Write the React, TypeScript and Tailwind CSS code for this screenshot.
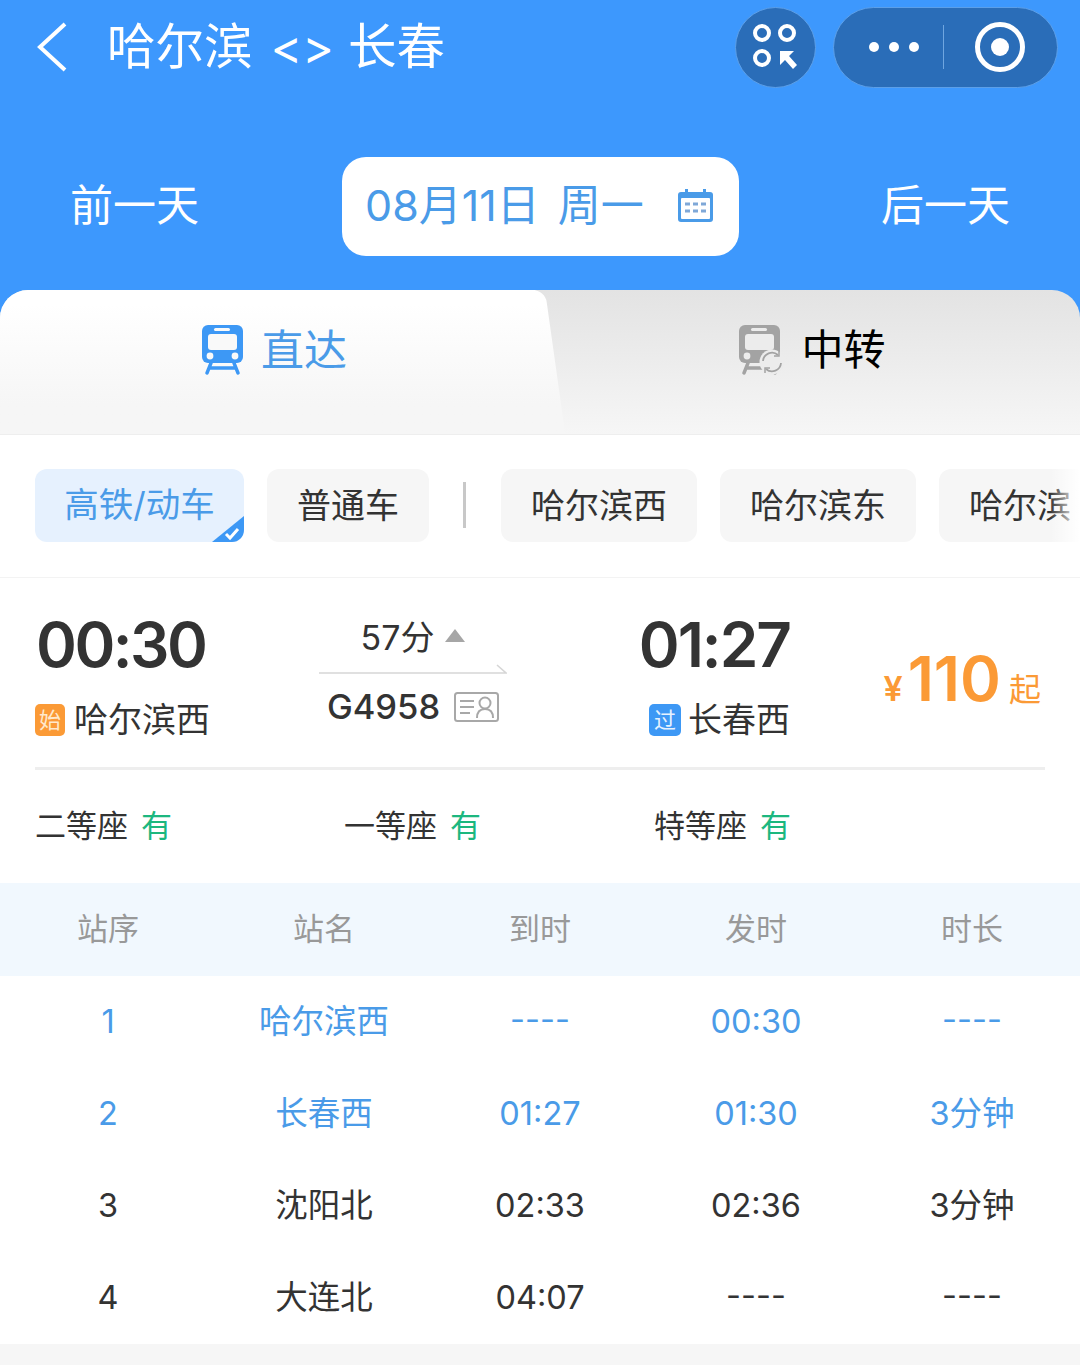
const font = { fontFamily: '"Inter","Noto Sans CJK SC",sans-serif' };

function TrainIcon({ gray }: { gray?: boolean }) {
  const c = gray ? "#a3a3a3" : "#3d98f5";
  const bg = gray ? "#ececec" : "#f9f9f9";
  return (
    <svg width="46" height="50" viewBox="0 0 46 50">
      <path d="M7 0h29a6 6 0 0 1 6 6v26a6 6 0 0 1-6 6H7a6 6 0 0 1-6-6V6a6 6 0 0 1 6-6z" fill={c} />
      <rect x="13" y="3" width="16" height="3" rx="1.5" fill={bg} />
      <rect x="7" y="9" width="29" height="16" rx="3" fill={bg} />
      <circle cx="9" cy="31" r="3.4" fill={bg} />
      <circle cx="34" cy="31" r="3.4" fill={bg} />
      <path d="M10 38l-4 10M33 38l4 10M8 43h27" stroke={c} strokeWidth="3.4" strokeLinecap="round" fill="none" />
      {gray && (
        <g>
          <circle cx="34" cy="37" r="12.5" fill={bg} />
          <path d="M25 36a9 9 0 0 1 15-6M43 38a9 9 0 0 1-15 6" stroke={c} strokeWidth="1.8" fill="none" />
          <path d="M41 26v5h-5M27 48v-5h5" stroke={c} strokeWidth="1.5" fill="none" />
        </g>
      )}
    </svg>
  );
}

const rows = [
  ["1", "哈尔滨西", "----", "00:30", "----"],
  ["2", "长春西", "01:27", "01:30", "3分钟"],
  ["3", "沈阳北", "02:33", "02:36", "3分钟"],
  ["4", "大连北", "04:07", "----", "----"],
];

export default function App() {
  return (
    <div className="w-[1080px] h-[1365px] overflow-hidden bg-white" style={font}>
      {/* header */}
      <div className="h-[290px] bg-[#3d98fd] flex flex-col">
        <div className="flex items-center h-[94px] pl-[36px] pr-[22px]">
          <svg width="32" height="50" viewBox="0 0 32 50" fill="none">
            <path d="M29 2L4 25l25 23" stroke="#fff" strokeWidth="4" />
          </svg>
          <div className="ml-[39px] text-[48.5px] leading-none text-white flex items-center">
            <span>哈尔滨</span>
            <span className="ml-[18px] mr-[14px] text-[48px]">&lt;&gt;</span>
            <span>长春</span>
          </div>
          <div className="ml-auto flex items-center gap-[17px]">
            <div className="w-[81px] h-[81px] rounded-full bg-[#2a6db8] border border-[#5c9fe8] flex items-center justify-center">
              <svg width="46" height="46" viewBox="0 0 46 46" fill="none">
                <circle cx="9" cy="9" r="7" stroke="#fff" strokeWidth="4" />
                <circle cx="34" cy="9" r="7" stroke="#fff" strokeWidth="4" />
                <circle cx="9" cy="34" r="7" stroke="#fff" strokeWidth="4" />
                <path d="M27 27h14l-5 5 8 9-4 4-8-9-5 5z" fill="#fff" />
              </svg>
            </div>
            <div className="w-[225px] h-[81px] rounded-full bg-[#2a6db8] border border-[#5c9fe8] flex items-center pl-[35px]">
              <div className="flex gap-[10px]">
                <span className="w-[10px] h-[10px] rounded-full bg-white" />
                <span className="w-[10px] h-[10px] rounded-full bg-white" />
                <span className="w-[10px] h-[10px] rounded-full bg-white" />
              </div>
              <div className="w-px h-[44px] bg-[#6fa6e0] ml-[24px]" />
              <div className="ml-[31px] w-[50px] h-[50px] rounded-full border-[5px] border-white flex items-center justify-center">
                <span className="w-[18px] h-[18px] rounded-full bg-white" />
              </div>
            </div>
          </div>
        </div>
        <div className="mt-[63px] flex items-center h-[99px]">
          <div className="w-[342px] pl-[70px] pb-[2px] text-[43px] text-white leading-none">前一天</div>
          <div className="w-[397px] h-[99px] bg-white rounded-[24px] flex items-center pl-[23px] pb-[2px] text-[43px] text-[#4a9be8] leading-none whitespace-pre">
            <span>08月11日</span>
            <span className="ml-[18px]">周一</span>
            <svg className="ml-[33px]" width="37" height="34" viewBox="0 0 37 34">
              <path d="M4 3h29a3 3 0 0 1 3 3v24a3 3 0 0 1-3 3H4a3 3 0 0 1-3-3V6a3 3 0 0 1 3-3z" fill="#4a9be8" />
              <rect x="8" y="0" width="3" height="5" fill="#4a9be8" />
              <rect x="26" y="0" width="3" height="5" fill="#4a9be8" />
              <rect x="4" y="9" width="29" height="21" rx="1" fill="#fff" />
              <path d="M8 15h5M16 15h5M24 15h5M8 22h5M16 22h5M24 22h5" stroke="#7fa8d8" strokeWidth="3" />
            </svg>
          </div>
          <div className="flex-1 pl-[142px] pb-[2px] text-[43px] text-white leading-none">后一天</div>
        </div>
      </div>

      {/* tabs */}
      <div className="bg-[#3d98fd]">
        <div className="h-[145px] flex rounded-t-[28px] overflow-hidden bg-gradient-to-b from-[#e3e3e3] to-[#f6f6f6] border-b border-[#eeeeee]">
          <div className="relative w-[535px] h-full bg-gradient-to-b from-white from-10% to-[#f6f6f6] to-80% flex items-start pt-[35px] justify-center pl-[13px]">
            <div className="absolute top-0 bottom-0 right-[-10px] w-[60px] bg-gradient-to-b from-white from-10% to-[#f6f6f6] to-80% skew-x-[8deg] rounded-tr-[12px] origin-top" />
            <div className="relative flex items-center gap-[14px]">
              <TrainIcon />
              <span className="text-[43px] leading-[50px] text-[#4a9be8]">直达</span>
            </div>
          </div>
          <div className="flex-1 flex items-start justify-center pt-[35px] pl-[9px]">
            <div className="flex items-center gap-[17px]">
              <TrainIcon gray />
              <span className="text-[42px] leading-[50px] text-black">中转</span>
            </div>
          </div>
        </div>
      </div>

      {/* filters */}
      <div className="relative h-[143px] pb-[2px] pl-[35px] flex items-center gap-[23px] overflow-hidden whitespace-nowrap border-b border-[#f3f3f3]">
        <div className="relative shrink-0 w-[209px] h-[73px] rounded-[12px] bg-[#e6f1fe] text-[#4a9be8] text-[34.5px] flex items-center justify-center overflow-hidden">
          高铁/动车
          <svg className="absolute right-0 bottom-0" width="32" height="26" viewBox="0 0 32 26">
            <path d="M32 0v26H0z" fill="#3d98f5" />
            <path d="M14 18l4 4 8-9" stroke="#fff" strokeWidth="3" fill="none" />
          </svg>
        </div>
        <div className="shrink-0 w-[162px] h-[73px] rounded-[12px] bg-[#f6f6f6] text-[#333] text-[34px] flex items-center justify-center">普通车</div>
        <div className="shrink-0 w-[3px] h-[46px] bg-[#c8c8c8] ml-[11px] mr-[12px]" />
        <div className="shrink-0 w-[196px] h-[73px] rounded-[12px] bg-[#f6f6f6] text-[#333] text-[34px] flex items-center justify-center">哈尔滨西</div>
        <div className="shrink-0 w-[196px] h-[73px] rounded-[12px] bg-[#f6f6f6] text-[#333] text-[34px] flex items-center justify-center">哈尔滨东</div>
        <div className="shrink-0 w-[196px] h-[73px] rounded-[12px] bg-[#f6f6f6] text-[#333] text-[34px] flex items-center pl-[30px]">哈尔滨</div>
        <div className="absolute right-0 top-0 bottom-0 w-[30px] bg-gradient-to-r from-transparent to-white" />
      </div>

      {/* train */}
      <div className="px-[35px]">
        <div className="h-[192px] flex border-b-[3px] border-[#eeeeee] pt-[32px]">
          <div className="w-[284px]">
            <div className="text-[62px] leading-[70px] font-semibold text-[#333] tracking-[-2.5px] pl-[1px]">00:30</div>
            <div className="mt-[23px] flex items-center gap-[9px] text-[34px] text-[#333] leading-[34px]">
              <span className="w-[30px] h-[32px] rounded-[5px] bg-[#fb9a36] text-[#ffe9cc] text-[22px] flex items-center justify-center">始</span>
              哈尔滨西
            </div>
          </div>
          <div className="w-[188px] flex flex-col items-center">
            <div className="flex items-center text-[34px] text-[#333] leading-[44px] h-[46px] mt-[5px]">
              57分
              <svg className="ml-[11px] mb-[6px]" width="20" height="13" viewBox="0 0 20 13"><path d="M10 0l10 13H0z" fill="#a6a6a6" /></svg>
            </div>
            <svg className="mt-[2px]" width="188" height="12" viewBox="0 0 188 12" fill="none">
              <path d="M0 10h187l-9-8" stroke="#d6d6d6" strokeWidth="1.6" />
            </svg>
            <div className="mt-[10px] flex items-center gap-[14px] text-[34.5px] leading-[44px] font-medium text-[#333]">
              G4958
              <svg width="45" height="30" viewBox="0 0 45 30" fill="none" stroke="#a8a8a8">
                <rect x="1" y="1" width="43" height="28" rx="2.5" strokeWidth="2" />
                <path d="M6 9h14M6 15h14M6 21h10" strokeWidth="2" />
                <circle cx="31" cy="11" r="5.5" strokeWidth="2" />
                <path d="M23 26c0-6 3-9 8-9s8 3 8 9" strokeWidth="2" />
              </svg>
            </div>
          </div>
          <div className="w-[283px] flex flex-col items-end">
            <div className="text-[62px] leading-[70px] font-semibold text-[#333] tracking-[-2px]">01:27</div>
            <div className="mt-[23px] flex items-center gap-[7px] text-[34px] text-[#333] leading-[34px]">
              <span className="w-[32px] h-[32px] rounded-[5px] bg-[#3d98f5] text-[#e6f2ff] text-[22px] flex items-center justify-center">过</span>
              长春西
            </div>
          </div>
          <div className="ml-auto pr-[4px] flex items-baseline h-[70px] mt-[38px] text-[#fb9a36] leading-none">
            <span className="text-[34px] font-semibold">¥</span>
            <span className="text-[62px] font-semibold ml-[5px]">110</span>
            <span className="text-[32px] ml-[8px]">起</span>
          </div>
        </div>
        <div className="h-[113px] grid grid-cols-[309px_310px_1fr] items-center text-[31px] text-[#333]">
          <div className="flex gap-[13px]"><span>二等座</span><span className="text-[#1cb77f]">有</span></div>
          <div className="flex gap-[13px]"><span>一等座</span><span className="text-[#1cb77f]">有</span></div>
          <div className="flex gap-[13px]"><span>特等座</span><span className="text-[#1cb77f]">有</span></div>
        </div>
      </div>

      {/* table */}
      <div className="h-[93px] bg-[#f1f8fe] grid grid-cols-5 items-center text-center text-[31px] text-[#999]">
        <span>站序</span><span>站名</span><span>到时</span><span>发时</span><span>时长</span>
      </div>
      {rows.map((r, i) => (
        <div key={i} className={`h-[92px] pt-[1px] grid grid-cols-5 items-center text-center text-[32.5px] ${i < 2 ? "text-[#4a9be8]" : "text-[#333]"}`}>
          {r.map((c, j) => <span key={j} className={c === "----" ? "-translate-y-[2px]" : ""}>{c}</span>)}
        </div>
      ))}
      <div className="h-[21px] bg-[#f6f6f6]" />
    </div>
  );
}
